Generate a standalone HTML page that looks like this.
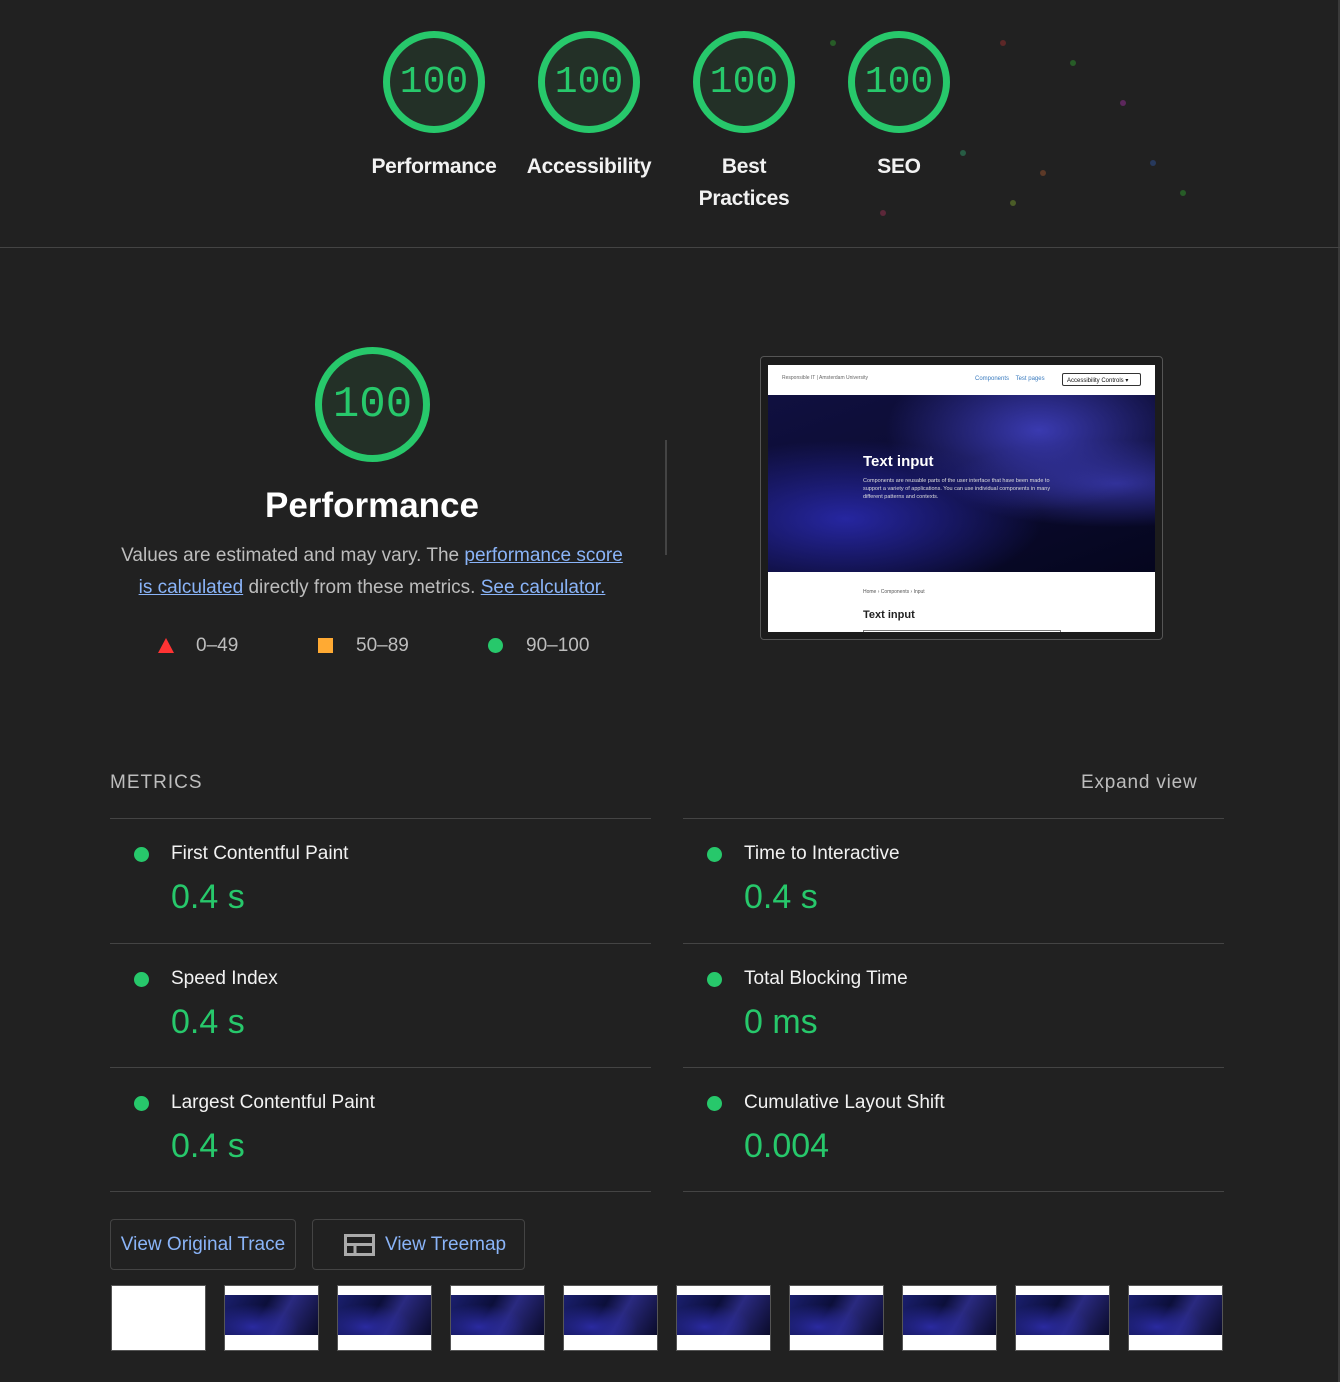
<!DOCTYPE html>
<html><head><meta charset="utf-8"><style>
*{box-sizing:border-box;margin:0;padding:0}
body{width:1340px;height:1382px;background:#212121;font-family:"Liberation Sans",sans-serif;color:#fff;position:relative;overflow:hidden}
.g{position:absolute;border:7px solid #27c86b;border-radius:50%;background:#233027;color:#27c86b;font-family:"Liberation Mono",monospace;display:flex;align-items:center;justify-content:center}
.lbl{position:absolute;width:150px;text-align:center;font-size:21px;font-weight:bold;line-height:32px;color:#f2f2f2;letter-spacing:-0.3px}
.a{color:#8ab4f8;text-decoration:underline}
.m{position:absolute;width:541px;border-top:1px solid #444;height:125px}
.m .d{position:absolute;left:24px;top:28px;width:15px;height:15px;border-radius:50%;background:#27c86b}
.m .t{position:absolute;left:61px;top:24px;font-size:19px;color:#f2f2f2}
.m .v{position:absolute;left:61px;top:59px;font-size:34px;color:#27c86b}
.th{position:absolute;top:1285px;width:95px;height:66px;border:1px solid #555;background:#fff;overflow:hidden}
.th i{position:absolute;left:0;right:0;top:9px;height:40px;background:radial-gradient(ellipse at 30% 80%,#2a2aa0,transparent 50%),linear-gradient(120deg,#1a1f6e,#0c0f3a 40%,#2a2a80 60%,#0a0b2a)}
.btn{position:absolute;top:1219px;height:51px;border:1px solid #444;border-radius:4px;color:#8ab4f8;font-size:19px;display:flex;align-items:center}
.c{position:absolute;width:6px;height:6px;border-radius:50%;opacity:.35}
</style></head><body>
<div style="position:absolute;right:0;top:0;width:2px;height:1382px;background:#3a3a3a"></div>
<div class="c" style="left:1000px;top:40px;background:#c33"></div>
<div class="c" style="left:1070px;top:60px;background:#3c3"></div>
<div class="c" style="left:1120px;top:100px;background:#c3c"></div>
<div class="c" style="left:960px;top:150px;background:#3c8"></div>
<div class="c" style="left:1040px;top:170px;background:#c63"></div>
<div class="c" style="left:1150px;top:160px;background:#36c"></div>
<div class="c" style="left:1010px;top:200px;background:#9c3"></div>
<div class="c" style="left:880px;top:210px;background:#c36"></div>
<div class="c" style="left:1180px;top:190px;background:#3c3"></div>
<div class="c" style="left:830px;top:40px;background:#3c3"></div>
<div class="g" style="left:383px;top:31px;width:102px;height:102px;font-size:38px">100</div>
<div class="g" style="left:538px;top:31px;width:102px;height:102px;font-size:38px">100</div>
<div class="g" style="left:693px;top:31px;width:102px;height:102px;font-size:38px">100</div>
<div class="g" style="left:848px;top:31px;width:102px;height:102px;font-size:38px">100</div>
<div class="lbl" style="left:359px;top:151px">Performance</div>
<div class="lbl" style="left:514px;top:151px">Accessibility</div>
<div class="lbl" style="left:669px;top:151px">Best<br>Practices</div>
<div class="lbl" style="left:824px;top:151px">SEO</div>
<div style="position:absolute;left:0;top:247px;width:1340px;height:1px;background:#444"></div>

<div class="g" style="left:315px;top:347px;width:115px;height:115px;font-size:44px">100</div>
<div style="position:absolute;left:172px;width:400px;top:486px;text-align:center;font-size:35px;font-weight:bold">Performance</div>
<div style="position:absolute;left:112px;width:520px;top:540px;text-align:center;font-size:19px;line-height:32px;color:#bdbdbd">Values are estimated and may vary. The <span class="a">performance score is calculated</span> directly from these metrics. <span class="a">See calculator.</span></div>
<div style="position:absolute;left:158px;top:638px;width:0;height:0;border-left:8px solid transparent;border-right:8px solid transparent;border-bottom:15px solid #f33"></div>
<div style="position:absolute;left:196px;top:635px;font-size:19px;color:#bdbdbd">0–49</div>
<div style="position:absolute;left:318px;top:638px;width:15px;height:15px;background:#fa3"></div>
<div style="position:absolute;left:356px;top:635px;font-size:19px;color:#bdbdbd">50–89</div>
<div style="position:absolute;left:488px;top:638px;width:15px;height:15px;border-radius:50%;background:#27c86b"></div>
<div style="position:absolute;left:526px;top:635px;font-size:19px;color:#bdbdbd">90–100</div>
<div style="position:absolute;left:665px;top:440px;width:2px;height:115px;background:#444"></div>

<div style="position:absolute;left:760px;top:356px;width:403px;height:284px;border:1px solid #555;border-radius:4px;background:#1c1c1c">
<div style="position:absolute;left:7px;top:8px;width:387px;height:267px;background:#fff;overflow:hidden">
<div style="position:absolute;left:14px;top:10px;font-size:5px;color:#666">Responsible IT | Amsterdam University</div>
<div style="position:absolute;left:207px;top:11px;font-size:6px;color:#3a7bbf">Components &nbsp;&nbsp; Test pages</div>
<div style="position:absolute;left:294px;top:8px;width:79px;height:13px;border:1px solid #333;border-radius:2px;font-size:6px;color:#111;padding:3px 4px">Accessibility Controls ▾</div>
<div style="position:absolute;left:0;top:30px;width:387px;height:177px;background:radial-gradient(ellipse at 20% 70%,#2626a0 0%,transparent 45%),radial-gradient(ellipse at 70% 20%,#3a3ab0 0%,transparent 40%),radial-gradient(ellipse at 90% 50%,#303095 0%,transparent 35%),linear-gradient(160deg,#101040,#0b0b30 50%,#05061e)">
<div style="position:absolute;left:95px;top:58px;font-size:15px;font-weight:bold;color:#fff">Text input</div>
<div style="position:absolute;left:95px;top:82px;width:195px;font-size:5.5px;line-height:8px;color:#ddd">Components are reusable parts of the user interface that have been made to support a variety of applications. You can use individual components in many different patterns and contexts.</div>
</div>
<div style="position:absolute;left:95px;top:224px;font-size:5px;color:#555">Home › Components › Input</div>
<div style="position:absolute;left:95px;top:244px;font-size:11px;font-weight:bold;color:#222">Text input</div>
<div style="position:absolute;left:95px;top:265px;width:198px;height:4px;border:1px solid #777"></div>
</div></div>

<div style="position:absolute;left:110px;top:772px;font-size:19px;letter-spacing:1px;color:#bdbdbd">METRICS</div>
<div style="position:absolute;left:1081px;top:772px;font-size:19px;letter-spacing:.8px;color:#bdbdbd">Expand view</div>
<div class="m" style="left:110px;top:818px"><div class="d"></div><div class="t">First Contentful Paint</div><div class="v">0.4 s</div></div>
<div class="m" style="left:683px;top:818px"><div class="d"></div><div class="t">Time to Interactive</div><div class="v">0.4 s</div></div>
<div class="m" style="left:110px;top:943px"><div class="d"></div><div class="t">Speed Index</div><div class="v">0.4 s</div></div>
<div class="m" style="left:683px;top:943px"><div class="d"></div><div class="t">Total Blocking Time</div><div class="v">0 ms</div></div>
<div class="m" style="left:110px;top:1067px;border-bottom:1px solid #444"><div class="d"></div><div class="t">Largest Contentful Paint</div><div class="v">0.4 s</div></div>
<div class="m" style="left:683px;top:1067px;border-bottom:1px solid #444"><div class="d"></div><div class="t">Cumulative Layout Shift</div><div class="v">0.004</div></div>

<div class="btn" style="left:110px;width:186px;justify-content:center">View Original Trace</div>
<div class="btn" style="left:312px;width:213px;padding-left:31px">
<svg width="31" height="22" viewBox="0 0 31 22" style="margin-right:10px"><rect x="1.5" y="1.5" width="28" height="19" fill="none" stroke="#aaa" stroke-width="3"/><path d="M1.5 10.5H29.5M11 10.5V20.5" stroke="#aaa" stroke-width="3"/></svg>View Treemap</div>

<div class="th" style="left:111px"></div>
<div class="th" style="left:224px"><i></i></div>
<div class="th" style="left:337px"><i></i></div>
<div class="th" style="left:450px"><i></i></div>
<div class="th" style="left:563px"><i></i></div>
<div class="th" style="left:676px"><i></i></div>
<div class="th" style="left:789px"><i></i></div>
<div class="th" style="left:902px"><i></i></div>
<div class="th" style="left:1015px"><i></i></div>
<div class="th" style="left:1128px"><i></i></div>
</body></html>
